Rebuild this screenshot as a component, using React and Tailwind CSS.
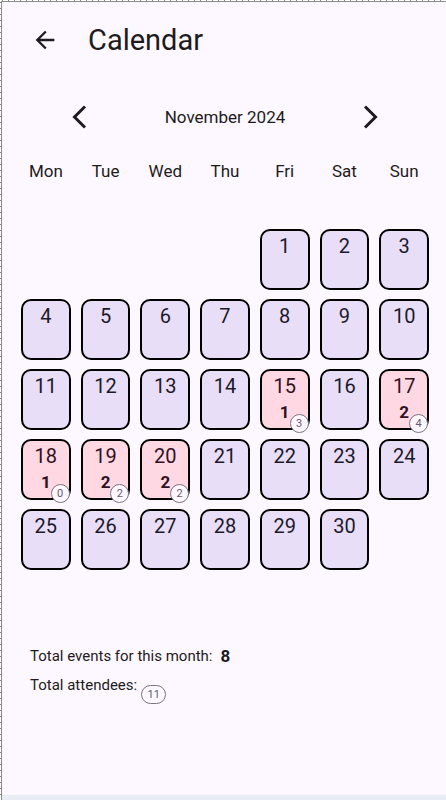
import React from "react";

const weekdays = ["Mon", "Tue", "Wed", "Thu", "Fri", "Sat", "Sun"];
const firstColumn = 4;
const dayCount = 30;
const events = {
  15: { count: 1, attendees: 3 },
  17: { count: 2, attendees: 4 },
  18: { count: 1, attendees: 0 },
  19: { count: 2, attendees: 2 },
  20: { count: 2, attendees: 2 },
};

function Day({ day }) {
  const event = events[day];
  return (
    <button
      type="button"
      className={`relative flex flex-col items-center rounded-[10px] border-2 border-black pt-[2px] ${
        event ? "bg-[#ffd8e4] text-[#31111d]" : "bg-[#e8def8] text-[#1d192b]"
      }`}
    >
      <span className="text-[20px] leading-[26px]">{day}</span>
      {event && <span className="text-[17px] leading-[26px] font-bold">{event.count}</span>}
      {event && (
        <span className="absolute -right-px -bottom-[5px] flex size-[19px] items-center justify-center rounded-full border border-[#79747e] bg-[#fef7ff] text-[11px] leading-4 text-[#625b71]">
          {event.attendees}
        </span>
      )}
    </button>
  );
}

export default function App() {
  const blanks = Array.from({ length: firstColumn }, (_, i) => i);
  const days = Array.from({ length: dayCount }, (_, i) => i + 1);
  return (
    <div className="flex min-h-screen flex-col bg-[#fdf8ff] font-[Roboto,sans-serif] text-[#1d1b20]">
      <div className="h-px bg-[repeating-linear-gradient(90deg,#fff_0_2px,#8a8a8a_2px_3px,#fff_3px_6px)]" />
      <div className="flex grow">
        <div className="w-px bg-[repeating-linear-gradient(180deg,#fff_0_1px,#8a8a8a_1px_2px,#fff_2px_6px)]" />
        <div className="flex grow flex-col border-t border-l border-[#8a8a8a]">
          <header className="flex h-[76px] items-center gap-[29px] pl-[29px]">
            <button type="button" aria-label="Back">
              <svg viewBox="0 0 24 24" className="size-7" fill="currentColor">
                <path d="M20 11H7.83l5.59-5.59L12 4l-8 8 8 8 1.41-1.41L7.83 13H20v-2z" />
              </svg>
            </button>
            <h1 className="text-[29px] leading-10">Calendar</h1>
          </header>

          <main className="pr-[17px] pl-[19px]">
            <nav aria-label="Month" className="mt-[21px] flex h-[36px] items-center justify-between px-[44px]">
              <button type="button" aria-label="Previous month">
                <svg viewBox="0 0 28 28" className="size-7" fill="none" stroke="currentColor" strokeWidth="3">
                  <path d="M20 3.5 9.5 14 20 24.5" />
                </svg>
              </button>
              <h2 className="text-[17px] leading-6">November 2024</h2>
              <button type="button" aria-label="Next month">
                <svg viewBox="0 0 28 28" className="size-7" fill="none" stroke="currentColor" strokeWidth="3">
                  <path d="M8 3.5 18.5 14 8 24.5" />
                </svg>
              </button>
            </nav>

            <div className="mt-[24px] grid grid-cols-7 gap-[10px] text-center text-[17px] leading-6">
              {weekdays.map((name) => (
                <span key={name}>{name}</span>
              ))}
            </div>

            <div className="mt-[46px] grid auto-rows-[61px] grid-cols-7 gap-x-[10px] gap-y-[9px]">
              {blanks.map((i) => (
                <span key={`blank-${i}`} />
              ))}
              {days.map((day) => (
                <Day key={day} day={day} />
              ))}
            </div>

            <section className="mt-[74px] pl-[9px] text-[15px] leading-6">
              <p className="flex gap-2">
                Total events for this month: <strong className="text-[17px] font-bold">8</strong>
              </p>
              <p className="mt-[5px] flex items-start gap-1">
                Total attendees:
                <span className="mt-3 flex h-[19px] w-[25px] items-center justify-center rounded-full border border-[#79747e] text-[11px] leading-4 text-[#625b71]">
                  11
                </span>
              </p>
            </section>
          </main>

          <div className="mt-auto h-[5px] bg-[#e8ecf4]" />
        </div>
      </div>
    </div>
  );
}
